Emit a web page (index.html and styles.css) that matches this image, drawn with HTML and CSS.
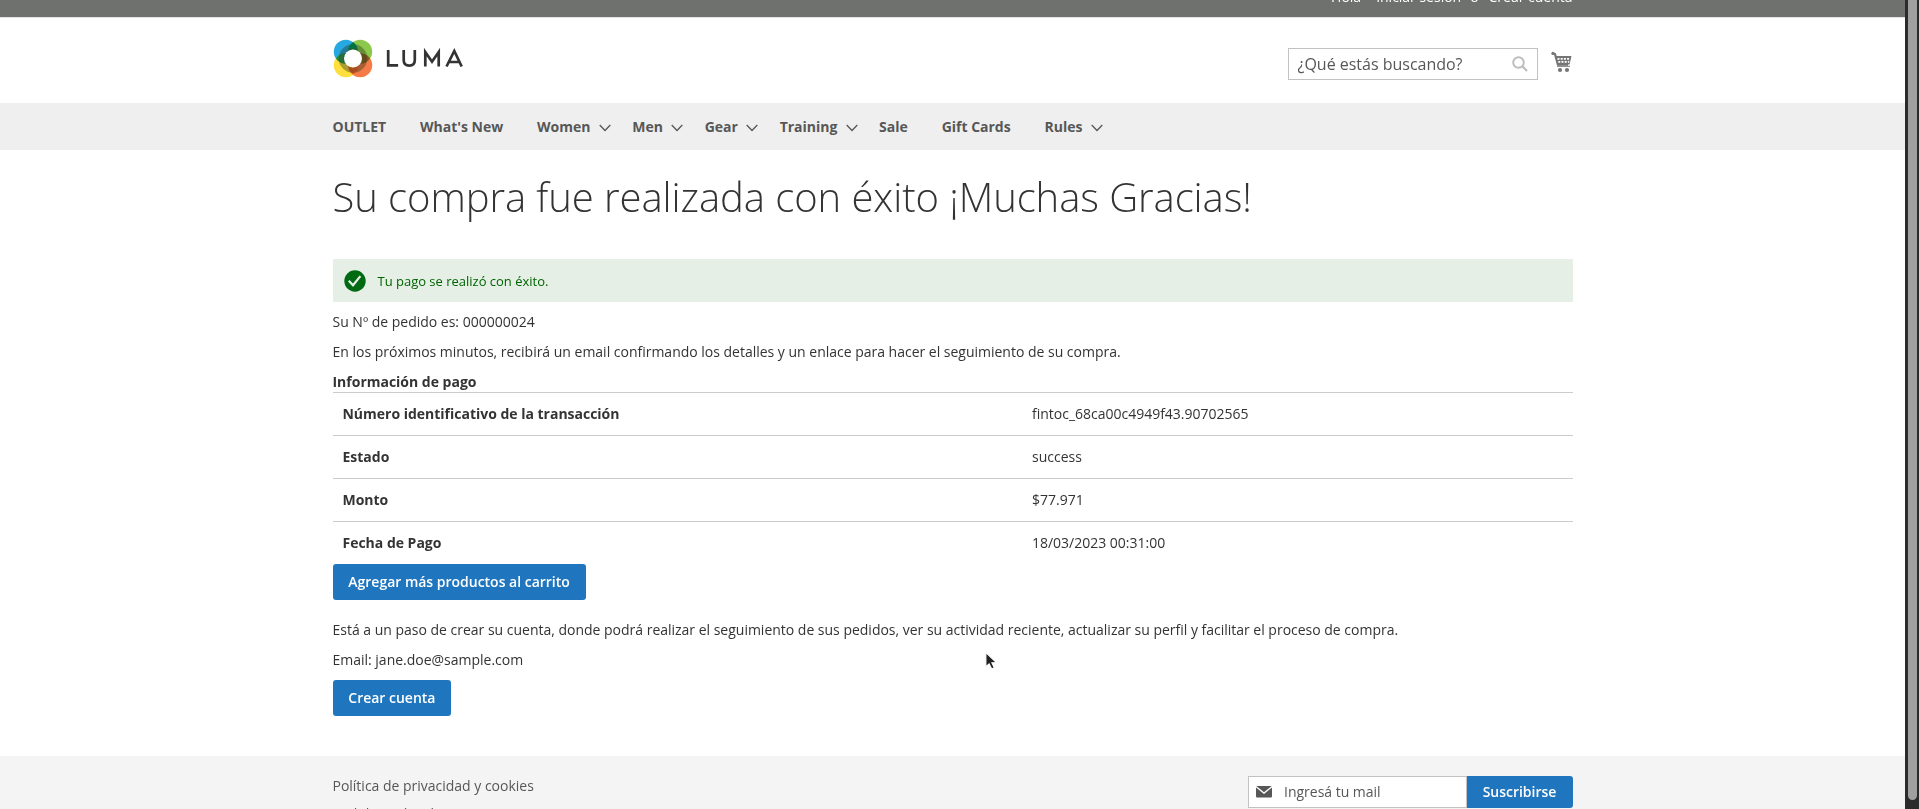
FILE: index.html
```html
<!DOCTYPE html>
<html lang="es">
<head>
<meta charset="utf-8">
<title>Su compra fue realizada con éxito</title>
<link rel="stylesheet" href="styles.css">
</head>
<body>
<div class="viewport">
<div class="page">
  <div class="panel"><div class="container panel-links"><span>Hola</span><a class="signin">Iniciar sesión</a><span class="or">o</span><a>Crear cuenta</a></div></div>
  <header class="header">
    <div class="container header-row">
      <div class="logo">
        <svg class="logo-svg" width="132" height="40" viewBox="0 0 132 40">
          <g class="petals">
            <circle cx="12.8" cy="12.8" r="12" fill="#26a8e0"/>
            <circle cx="27.2" cy="12.8" r="12" fill="#8cc84b"/>
            <circle cx="12.8" cy="26.2" r="12" fill="#ffdf3d"/>
            <circle cx="27.2" cy="26.2" r="12" fill="#f67b47"/>
          </g>
          <circle cx="20" cy="19.500" r="11.600" fill="none" stroke="#28301c" stroke-opacity=".38" stroke-width="5.400"/>
          <path d="M15.300 9.900a12 12 0 0 1 4.700-6.700a12 12 0 0 1 4.700 6.700q-4.700-2-9.400 0Z" fill="#007440"/>
          <path d="M10.300 14.800Q7.500 17 5.500 19.500Q7.500 22 10.300 24.200Q8.800 19.500 10.300 14.800Z" fill="#2d703d"/>
          <path d="M29.700 14.800Q32.500 17 34.500 19.500Q32.500 22 29.700 24.200Q31.200 19.500 29.700 14.800Z" fill="#6b4720"/>
          <path d="M15.300 29.200Q20 31 24.700 29.200Q24 32 20 34.500Q16 32 15.300 29.200Z" fill="#a94a25"/>
          <circle cx="20" cy="19.500" r="9" fill="#fff"/>
          <g fill="none" stroke="#333" stroke-width="2.700">
            <path d="M55.200 11v15.300h9.900M70.700 11v10c0 3.600 2 5.700 5.600 5.700s5.500-2.100 5.500-5.700V11M92.300 27.500V13l6.700 9.700 6.700-9.700v14.500"/>
            <path d="M113.500 27.500L121.300 12l7.400 15.500M116 23h10.500"/>
          </g>
        </svg>
      </div>
      <div class="header-tools">
        <div class="search"><span>¿Qué estás buscando?</span>
          <svg width="16" height="16" viewBox="0 0 16 16" fill="none" stroke="#bdbdbd"><circle cx="6.500" cy="6.500" r="5.300" stroke-width="1.900"/><path d="M10.300 10.300L15 15" stroke-width="2.200"/></svg>
        </div>
        <svg class="cart" width="21" height="22" viewBox="0 0 21 22"><path d="M1 2.200L4 3.200L6.900 13.700H17" fill="none" stroke="#757575" stroke-width="2.200"/><circle cx="2" cy="2.300" r="1.600" fill="#757575"/><path d="M4 5h16.500l-1.900 8.500H6.500Z" fill="#757575"/><path d="M6.500 7.800h12.600M7.300 10.800h11" stroke="#fff" stroke-width="1.700" stroke-dasharray="2 1.200"/><path d="M6 15.300h13" stroke="#757575" stroke-width="1"/><circle cx="9" cy="19" r="2.100" fill="#757575"/><circle cx="16" cy="19" r="2.100" fill="#757575"/></svg>
      </div>
    </div>
  </header>
  <nav class="nav"><div class="container nav-row">
    <a>OUTLET</a><a>What's New</a>
    <a class="parent">Women<svg class="chev" viewBox="0 0 12 8"><path d="M.7 1L6 6.500L11.300 1"/></svg></a>
    <a class="parent">Men<svg class="chev" viewBox="0 0 12 8"><path d="M.7 1L6 6.500L11.300 1"/></svg></a>
    <a class="parent">Gear<svg class="chev" viewBox="0 0 12 8"><path d="M.7 1L6 6.500L11.300 1"/></svg></a>
    <a class="parent">Training<svg class="chev" viewBox="0 0 12 8"><path d="M.7 1L6 6.500L11.300 1"/></svg></a>
    <a>Sale</a><a>Gift Cards</a>
    <a class="parent">Rules<svg class="chev" viewBox="0 0 12 8"><path d="M.7 1L6 6.500L11.300 1"/></svg></a>
  </div></nav>
  <main class="container main">
    <h1 class="title">Su compra fue realizada con éxito ¡Muchas Gracias!</h1>
    <div class="success"><svg width="22" height="22" viewBox="0 0 22 22"><circle cx="11" cy="11" r="10.700" fill="#006a12"/><path d="M4.800 10.800l4.200 4.500 7.400-9.200" fill="none" stroke="#e5efe5" stroke-width="2.200"/></svg><span>Tu pago se realizó con éxito.</span></div>
    <p>Su Nº de pedido es: 000000024</p>
    <p>En los próximos minutos, recibirá un email confirmando los detalles y un enlace para hacer el seguimiento de su compra.</p>
    <div class="info-title">Información de pago</div>
    <dl class="info">
      <div class="info-row"><dt>Número identificativo de la transacción</dt><dd>fintoc_68ca00c4949f43.90702565</dd></div>
      <div class="info-row"><dt>Estado</dt><dd>success</dd></div>
      <div class="info-row"><dt>Monto</dt><dd>$77.971</dd></div>
      <div class="info-row"><dt>Fecha de Pago</dt><dd>18/03/2023 00:31:00</dd></div>
    </dl>
    <a class="button">Agregar más productos al carrito</a>
    <p class="register">Está a un paso de crear su cuenta, donde podrá realizar el seguimiento de sus pedidos, ver su actividad reciente, actualizar su perfil y facilitar el proceso de compra.</p>
    <p>Email: jane.doe@sample.com</p>
    <a class="button">Crear cuenta</a>
  </main>
  <footer class="footer"><div class="container footer-row">
    <div class="footer-links"><a>Política de privacidad y cookies</a><a>Pedidos y devoluciones</a></div>
    <div class="newsletter">
      <div class="mail"><svg width="16" height="12" viewBox="0 0 16 12"><path d="M.3 0h15.400L8 6.200Z" fill="#575757"/><path d="M0 1.500L8 8l8-6.500V10.500Q16 11.500 15 11.500H1Q0 11.500 0 10.500Z" fill="#575757"/></svg><span>Ingresá tu mail</span></div>
      <a class="subscribe">Suscribirse</a>
    </div>
  </div></footer>
</div>
<div class="scrollbar"><div class="thumb"></div></div>
<svg class="cursor" width="15" height="21" viewBox="0 0 16 22"><path d="M2 1.500V16.500L5.500 13.500L8.200 19L11 17.600L8.400 12.300L13 12Z" fill="#222" stroke="#fff" stroke-width="1.200"/></svg>
</div>
</body>
</html>
```
FILE: styles.css
```css
* { box-sizing: border-box; }
body { margin: 0; font: 14px/20px "Open Sans", "Noto Sans", sans-serif; letter-spacing: -.01px; color: #333; background: #fff; }
p, h1, dl, dd { margin: 0; }
.viewport { display: flex; position: relative; height: 809px; overflow: hidden; }
.page { width: 1905px; display: flex; flex-direction: column; }
.container { width: 1240px; margin: 0 auto; }
.panel { height: 18px; flex: none; background: #6e716e; border-bottom: 1px solid #e4e4e4; overflow: hidden; }
.panel-links { display: flex; justify-content: flex-end; color: #fff; margin-top: -13px; }
.signin { margin-left: 15px; }
.or { margin: 0 10px 0 9px; }
.header { height: 85px; flex: none; }
.header-row { display: flex; justify-content: space-between; }
.logo { padding: 21.3px 0 0 .5px; }
.logo-svg { display: block; }
.petals { isolation: isolate; }
.petals circle { mix-blend-mode: multiply; }
.header-tools { display: flex; padding: 30px 1px 0 0; }
.search { width: 250px; height: 32px; border: 1px solid #c2c2c2; display: flex; align-items: center; justify-content: space-between; padding: 0 9px; font-size: 16px; line-height: 22px; color: #575757; }
.cart { margin: 3px 0 0 13px; }
.nav { height: 47px; flex: none; background: #efefef; }
.nav-row { display: flex; height: 47px; align-items: center; }
.nav a { display: flex; align-items: center; font-weight: 700; color: #575757; margin-right: 33.9px; line-height: 47px; }
.nav .parent { margin-right: 21.4px; }
.chev { width: 12px; height: 8px; margin: 3px 0 0 8.4px; fill: none; stroke: #575757; stroke-width: 1.3; }
.main { height: 606px; flex: none; }
.title { font-size: 40px; line-height: 44px; font-weight: 300; letter-spacing: -.07px; padding-top: 25px; height: 109px; }
.success { height: 43px; background: #e5efe5; color: #006400; font-size: 13px; display: flex; align-items: center; gap: 12px; padding-left: 11px; margin-bottom: 10px; }
.main p { height: 20px; margin-bottom: 10px; }
.info-title { font-weight: 700; }
.info-row { display: flex; border-top: 1px solid #ccc; height: 43px; padding: 11px 10px; }
.info dt { width: 689.5px; font-weight: 700; }
.button { display: inline-block; height: 36px; line-height: 36px; padding: 0 15.8px; border-radius: 3px; background: #1f76bf; color: #fff; font-weight: 600; }
.main .register { margin-top: 20px; }
.footer { flex: none; height: 200px; background: #f4f4f4; }
.footer-row { display: flex; justify-content: space-between; padding-top: 20px; }
.footer-links { display: flex; flex-direction: column; gap: 8px; color: #575757; }
.newsletter { display: flex; height: 32px; }
.mail { width: 219px; border: 1px solid #c2c2c2; background: #fff; display: flex; align-items: center; gap: 12.5px; padding-left: 7px; color: #575757; }
.subscribe { width: 106px; line-height: 32px; text-align: center; font-weight: 600; color: #fff; background: #1f76bf; border-radius: 0 3px 3px 0; }
.scrollbar { width: 14px; background: #2b2b2b; padding-left: 3px; }
.thumb { width: 9px; height: 800px; background: #a0a0a0; border-radius: 0 0 5px 5px; }
.cursor { position: absolute; left: 984px; top: 651px; }
```
